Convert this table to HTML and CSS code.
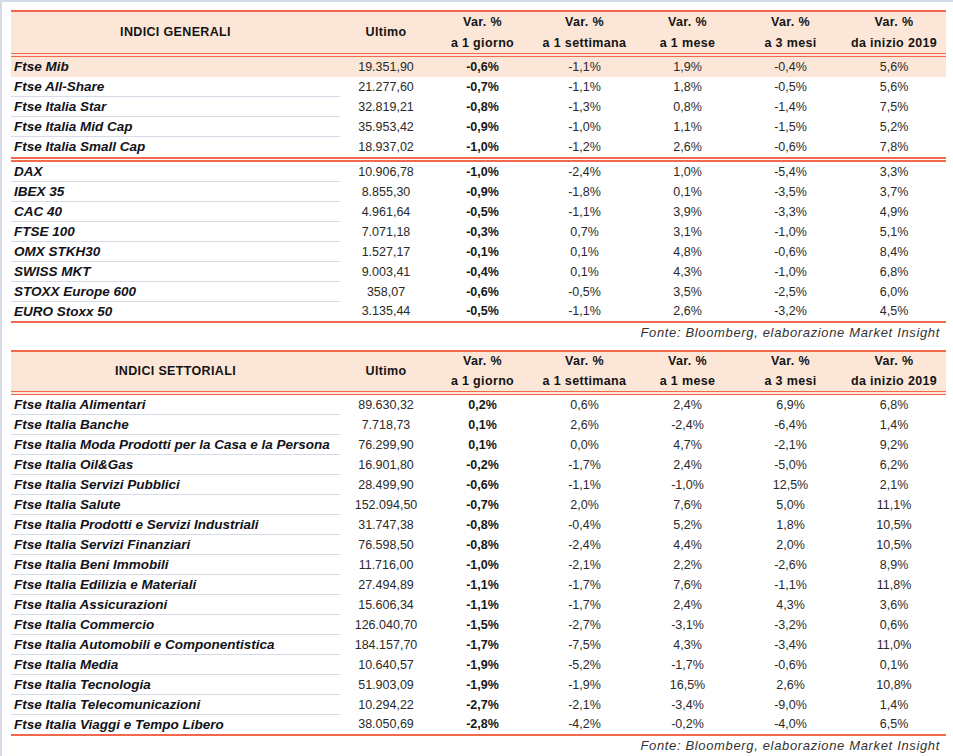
FILE: index.html
```html
<!DOCTYPE html>
<html lang="it">
<head>
<meta charset="utf-8">
<title>Indici</title>
<link rel="stylesheet" href="styles.css">
</head>
<body>
<div class="page">
  <section class="block">
    <table class="idx idx--gen">
      <colgroup>
        <col class="c-name"><col class="c-last"><col class="c-d1"><col class="c-var"><col class="c-var"><col class="c-var"><col class="c-ytd">
      </colgroup>
      <thead>
        <tr>
          <th class="h-name">INDICI GENERALI</th>
          <th>Ultimo</th>
          <th>Var. %<br>a 1 giorno</th>
          <th>Var. %<br>a 1 settimana</th>
          <th>Var. %<br>a 1 mese</th>
          <th>Var. %<br>a 3 mesi</th>
          <th>Var. %<br>da inizio 2019</th>
        </tr>
      </thead>
      <tbody>
        <tr class="hl"><td class="name">Ftse Mib</td><td>19.351,90</td><td class="d1">-0,6%</td><td>-1,1%</td><td>1,9%</td><td>-0,4%</td><td>5,6%</td></tr>
        <tr><td class="name">Ftse All-Share</td><td>21.277,60</td><td class="d1">-0,7%</td><td>-1,1%</td><td>1,8%</td><td>-0,5%</td><td>5,6%</td></tr>
        <tr><td class="name">Ftse Italia Star</td><td>32.819,21</td><td class="d1">-0,8%</td><td>-1,3%</td><td>0,8%</td><td>-1,4%</td><td>7,5%</td></tr>
        <tr><td class="name">Ftse Italia Mid Cap</td><td>35.953,42</td><td class="d1">-0,9%</td><td>-1,0%</td><td>1,1%</td><td>-1,5%</td><td>5,2%</td></tr>
        <tr class="group-end"><td class="name">Ftse Italia Small Cap</td><td>18.937,02</td><td class="d1">-1,0%</td><td>-1,2%</td><td>2,6%</td><td>-0,6%</td><td>7,8%</td></tr>
        <tr><td class="name">DAX</td><td>10.906,78</td><td class="d1">-1,0%</td><td>-2,4%</td><td>1,0%</td><td>-5,4%</td><td>3,3%</td></tr>
        <tr><td class="name">IBEX 35</td><td>8.855,30</td><td class="d1">-0,9%</td><td>-1,8%</td><td>0,1%</td><td>-3,5%</td><td>3,7%</td></tr>
        <tr><td class="name">CAC 40</td><td>4.961,64</td><td class="d1">-0,5%</td><td>-1,1%</td><td>3,9%</td><td>-3,3%</td><td>4,9%</td></tr>
        <tr><td class="name">FTSE 100</td><td>7.071,18</td><td class="d1">-0,3%</td><td>0,7%</td><td>3,1%</td><td>-1,0%</td><td>5,1%</td></tr>
        <tr><td class="name">OMX STKH30</td><td>1.527,17</td><td class="d1">-0,1%</td><td>0,1%</td><td>4,8%</td><td>-0,6%</td><td>8,4%</td></tr>
        <tr><td class="name">SWISS MKT</td><td>9.003,41</td><td class="d1">-0,4%</td><td>0,1%</td><td>4,3%</td><td>-1,0%</td><td>6,8%</td></tr>
        <tr><td class="name">STOXX Europe 600</td><td>358,07</td><td class="d1">-0,6%</td><td>-0,5%</td><td>3,5%</td><td>-2,5%</td><td>6,0%</td></tr>
        <tr><td class="name">EURO Stoxx 50</td><td>3.135,44</td><td class="d1">-0,5%</td><td>-1,1%</td><td>2,6%</td><td>-3,2%</td><td>4,5%</td></tr>
      </tbody>
    </table>
    <p class="source">Fonte: Bloomberg, elaborazione Market Insight</p>
  </section>

  <section class="block">
    <table class="idx idx--sect">
      <colgroup>
        <col class="c-name"><col class="c-last"><col class="c-d1"><col class="c-var"><col class="c-var"><col class="c-var"><col class="c-ytd">
      </colgroup>
      <thead>
        <tr>
          <th class="h-name">INDICI SETTORIALI</th>
          <th>Ultimo</th>
          <th>Var. %<br>a 1 giorno</th>
          <th>Var. %<br>a 1 settimana</th>
          <th>Var. %<br>a 1 mese</th>
          <th>Var. %<br>a 3 mesi</th>
          <th>Var. %<br>da inizio 2019</th>
        </tr>
      </thead>
      <tbody>
        <tr><td class="name">Ftse Italia Alimentari</td><td>89.630,32</td><td class="d1">0,2%</td><td>0,6%</td><td>2,4%</td><td>6,9%</td><td>6,8%</td></tr>
        <tr><td class="name">Ftse Italia Banche</td><td>7.718,73</td><td class="d1">0,1%</td><td>2,6%</td><td>-2,4%</td><td>-6,4%</td><td>1,4%</td></tr>
        <tr><td class="name">Ftse Italia Moda Prodotti per la Casa e la Persona</td><td>76.299,90</td><td class="d1">0,1%</td><td>0,0%</td><td>4,7%</td><td>-2,1%</td><td>9,2%</td></tr>
        <tr><td class="name">Ftse Italia Oil&amp;Gas</td><td>16.901,80</td><td class="d1">-0,2%</td><td>-1,7%</td><td>2,4%</td><td>-5,0%</td><td>6,2%</td></tr>
        <tr><td class="name">Ftse Italia Servizi Pubblici</td><td>28.499,90</td><td class="d1">-0,6%</td><td>-1,1%</td><td>-1,0%</td><td>12,5%</td><td>2,1%</td></tr>
        <tr><td class="name">Ftse Italia Salute</td><td>152.094,50</td><td class="d1">-0,7%</td><td>2,0%</td><td>7,6%</td><td>5,0%</td><td>11,1%</td></tr>
        <tr><td class="name">Ftse Italia Prodotti e Servizi Industriali</td><td>31.747,38</td><td class="d1">-0,8%</td><td>-0,4%</td><td>5,2%</td><td>1,8%</td><td>10,5%</td></tr>
        <tr><td class="name">Ftse Italia Servizi Finanziari</td><td>76.598,50</td><td class="d1">-0,8%</td><td>-2,4%</td><td>4,4%</td><td>2,0%</td><td>10,5%</td></tr>
        <tr><td class="name">Ftse Italia Beni Immobili</td><td>11.716,00</td><td class="d1">-1,0%</td><td>-2,1%</td><td>2,2%</td><td>-2,6%</td><td>8,9%</td></tr>
        <tr><td class="name">Ftse Italia Edilizia e Materiali</td><td>27.494,89</td><td class="d1">-1,1%</td><td>-1,7%</td><td>7,6%</td><td>-1,1%</td><td>11,8%</td></tr>
        <tr><td class="name">Ftse Italia Assicurazioni</td><td>15.606,34</td><td class="d1">-1,1%</td><td>-1,7%</td><td>2,4%</td><td>4,3%</td><td>3,6%</td></tr>
        <tr><td class="name">Ftse Italia Commercio</td><td>126.040,70</td><td class="d1">-1,5%</td><td>-2,7%</td><td>-3,1%</td><td>-3,2%</td><td>0,6%</td></tr>
        <tr><td class="name">Ftse Italia Automobili e Componentistica</td><td>184.157,70</td><td class="d1">-1,7%</td><td>-7,5%</td><td>4,3%</td><td>-3,4%</td><td>11,0%</td></tr>
        <tr><td class="name">Ftse Italia Media</td><td>10.640,57</td><td class="d1">-1,9%</td><td>-5,2%</td><td>-1,7%</td><td>-0,6%</td><td>0,1%</td></tr>
        <tr><td class="name">Ftse Italia Tecnologia</td><td>51.903,09</td><td class="d1">-1,9%</td><td>-1,9%</td><td>16,5%</td><td>2,6%</td><td>10,8%</td></tr>
        <tr><td class="name">Ftse Italia Telecomunicazioni</td><td>10.294,22</td><td class="d1">-2,7%</td><td>-2,1%</td><td>-3,4%</td><td>-9,0%</td><td>1,4%</td></tr>
        <tr><td class="name">Ftse Italia Viaggi e Tempo Libero</td><td>38.050,69</td><td class="d1">-2,8%</td><td>-4,2%</td><td>-0,2%</td><td>-4,0%</td><td>6,5%</td></tr>
      </tbody>
    </table>
    <p class="source">Fonte: Bloomberg, elaborazione Market Insight</p>
  </section>
</div>
</body>
</html>
```

FILE: styles.css
```css
* {
  box-sizing: border-box;
}

html, body {
  margin: 0;
  padding: 0;
  background: #ffffff;
}

body {
  font-family: "Liberation Sans", Arial, sans-serif;
  color: #222222;
}

.page {
  min-height: 100vh;
  border-left: 2px solid #d5dbe6;
  border-top: 2px solid #d5dbe6;
  padding: 8px 7px 0 9px;
}

.idx {
  width: 100%;
  border-collapse: separate;
  border-spacing: 0;
  table-layout: fixed;
}

.c-name { width: 329px; }
.c-last { width: 92px; }
.c-d1 { width: 101px; }
.c-var { width: 103px; }
.c-ytd { width: 104px; }

.idx thead th {
  background: #fce6d7;
  border-top: 2px solid #f2684d;
  border-bottom: 4px double #f2684d;
  padding: 0;
  font-size: 12.5px;
  font-weight: bold;
  letter-spacing: 0.35px;
  color: #141414;
  text-align: center;
  vertical-align: middle;
}

.idx--gen thead th {
  line-height: 20.5px;
}

.idx--sect thead th {
  line-height: 19.5px;
}

.idx tbody td {
  padding: 0;
  font-size: 12.5px;
  line-height: 20px;
  text-align: center;
  vertical-align: middle;
  color: #2a2a2a;
  white-space: nowrap;
}

.idx tbody td.name {
  text-align: left;
  padding-left: 3px;
  font-size: 13.5px;
  font-weight: bold;
  font-style: italic;
  color: #121218;
  line-height: 19px;
  border-bottom: 1px solid #d6dce7;
}

.idx tbody td.d1 {
  font-weight: bold;
  color: #161616;
}

.idx tbody tr.hl td {
  background: #fce6d7;
}

.idx tbody tr.hl td.name {
  border-bottom-color: #fce6d7;
}

.idx tbody tr.group-end td {
  border-bottom: 5px double #f2684d;
  line-height: 20px;
}

.idx tbody tr:last-child td {
  border-bottom: 2px solid #f2684d;
  line-height: 19px;
}

.source {
  margin: 0 6px 7px 0;
  text-align: right;
  font-style: italic;
  font-size: 13px;
  letter-spacing: 0.65px;
  line-height: 20px;
  color: #333333;
}
```
